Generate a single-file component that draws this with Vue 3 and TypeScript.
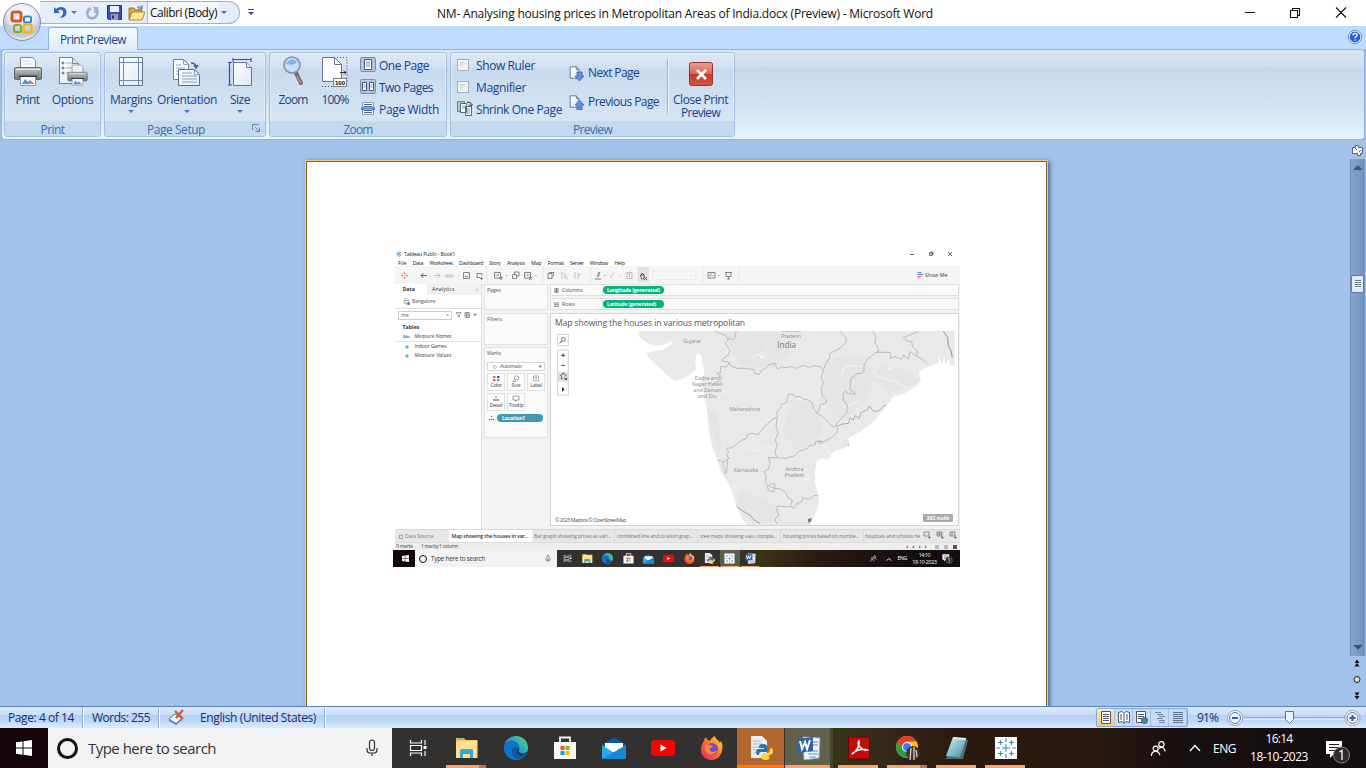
<script setup lang="ts">
import type { Directive } from 'vue'

// Spreads or tightens the letters of a label so that it takes a given width.
const vFit: Directive<HTMLElement, number> = {
  mounted(el, { value }) {
    const range = document.createRange()
    range.selectNodeContents(el)
    const length = (el.textContent ?? '').trim().length
    const width = range.getBoundingClientRect().width
    if (length > 0) el.style.letterSpacing = `${((value - width) / length).toFixed(3)}px`
  },
}

interface Label { text: string; w: number }
interface Task { icon: string; state?: string }

const menus: Label[] = [
  { text: 'File', w: 8.5 }, { text: 'Data', w: 10.5 }, { text: 'Worksheet', w: 23.5 },
  { text: 'Dashboard', w: 24 }, { text: 'Story', w: 11.5 }, { text: 'Analysis', w: 18 },
  { text: 'Map', w: 10.5 }, { text: 'Format', w: 16 }, { text: 'Server', w: 13.5 },
  { text: 'Window', w: 18.5 }, { text: 'Help', w: 10.5 },
]
const sheets: Label[] = [
  { text: 'Bar graph showing prices as vari...', w: 77 },
  { text: 'combined line and location grap...', w: 76 },
  { text: 'tree maps showing vasu compla...', w: 77 },
  { text: 'housing prices based on numbe...', w: 76 },
]
const tasks: Task[] = [
  { icon: 'taskview' }, { icon: 'explorer', state: 'open multi' }, { icon: 'edge' }, { icon: 'store' },
  { icon: 'mail' }, { icon: 'youtube' }, { icon: 'firefox' }, { icon: 'python', state: 'alert' },
  { icon: 'word', state: 'active' }, { icon: 'acrobat', state: 'open' }, { icon: 'chrome', state: 'open multi' },
  { icon: 'notepad', state: 'open' }, { icon: 'tableau', state: 'open' },
]
const miniTasks: Task[] = [
  { icon: 'taskview' }, { icon: 'explorer' }, { icon: 'edge' }, { icon: 'store' }, { icon: 'mail' },
  { icon: 'youtube' }, { icon: 'firefox' }, { icon: 'python', state: 'open' },
  { icon: 'tableau', state: 'active' }, { icon: 'word', state: 'open' },
]
const views = ['print', 'read', 'web', 'outline', 'draft']
</script>

<template>
  <div class="screen">
    <svg class="defs" width="0" height="0">
      <defs>
        <linearGradient id="gEdge" x1="0" y1="1" x2="1" y2="0"><stop offset="0" stop-color="#0c59a4" /><stop offset=".5" stop-color="#1b9de2" /><stop offset="1" stop-color="#5ddf5a" /></linearGradient>
        <linearGradient id="gFox" x1="0" y1="1" x2="1" y2="0"><stop offset="0" stop-color="#e9177a" /><stop offset=".5" stop-color="#ff7024" /><stop offset="1" stop-color="#ffe226" /></linearGradient>
        <linearGradient id="gNote" x1="0" y1="0" x2="1" y2="1"><stop offset="0" stop-color="#d5f0f4" /><stop offset="1" stop-color="#3f91a4" /></linearGradient>
        <linearGradient id="gPaper" x1="0" y1="0" x2="1" y2="1"><stop offset="0" stop-color="#fff" /><stop offset="1" stop-color="#dfe8f3" /></linearGradient>
        <linearGradient id="gBody" x1="0" y1="0" x2="0" y2="1"><stop offset="0" stop-color="#c9c9cb" /><stop offset="1" stop-color="#707176" /></linearGradient>
        <radialGradient id="gOrb" cx=".5" cy=".3" r=".7"><stop offset="0" stop-color="#fff" /><stop offset=".55" stop-color="#e3e7ee" /><stop offset=".8" stop-color="#bac3d2" /><stop offset="1" stop-color="#f4f7fb" /></radialGradient>
        <linearGradient id="gRed" x1="0" y1="0" x2="0" y2="1"><stop offset="0" stop-color="#eba297" /><stop offset=".48" stop-color="#d9644f" /><stop offset=".5" stop-color="#c23a22" /><stop offset="1" stop-color="#d4553f" /></linearGradient>
      </defs>
      <symbol id="taskview" viewBox="0 0 24 24"><g fill="none" stroke="#fff" stroke-width="1.2"><path d="M4.500 4v3h11V4M4.500 20v-3h11v3M4.500 9.500h11v5h-11zM19 4v5M19 15v5" /><path d="M19 10v3" stroke-width="3" /></g></symbol>
      <symbol id="explorer" viewBox="0 0 24 24"><path d="M1 2h8l1.500 2H22v17H1z" fill="#e8b64a" /><path d="M3 4.500h19.500V22H1V6z" fill="#ffe08d" /><path d="M5 22v-7q0-2 2-2h9q2 0 2 2v7h-3v-4H8v4z" fill="#36a7dd" /><path d="M3 3h5" stroke="#57b7df" stroke-width="1" /></symbol>
      <symbol id="edge" viewBox="0 0 24 24"><circle cx="12" cy="12" r="12" fill="url(#gEdge)" /><path d="M.5 11C2 5 8 3 12 6c3 2 4 5 3 7-1-3-6-3-7 1-1 5 3 8 6 9.500C6 25-.5 19 .5 11z" fill="#1273c2" /><path d="M8 14c1-4 6-4 7-1 0 2-2 2-1 4 2 2 6 2 9 0-2 5-7 7-10 6-3-1-6-5-5-9z" fill="#0d57a2" /><path d="M15 12c1 2-1 3 0 4 2 2 6 2 9-1l-1 2c-3 3-10 3-10-1 0-2 2-2 2-4z" fill="#33312f" /></symbol>
      <symbol id="store" viewBox="0 0 24 24"><path d="M7 7V1.500h10V7" fill="none" stroke="#f4f4f4" stroke-width="1.800" /><path d="M1 6h22v17H1z" fill="#f7f7f7" /><path d="M7.500 10h4v4h-4z" fill="#f04e24" /><path d="M12.500 10h4v4h-4z" fill="#7fba00" /><path d="M7.500 15h4v4h-4z" fill="#00a3ee" /><path d="M12.500 15h4v4h-4z" fill="#ffb900" /></symbol>
      <symbol id="mail" viewBox="0 0 24 24"><path d="M0 9 12 1l12 8v14H0z" fill="#0a5aa6" /><path d="M3 7h18v9H3z" fill="#fff" /><path d="m0 9 12 8L24 9v14H0z" fill="#29a8ea" /><path d="m0 23 24-14v14z" fill="#1689d6" /></symbol>
      <symbol id="youtube" viewBox="0 0 24 24"><rect x="0" y="4" width="24" height="16" rx="3.500" fill="#f20505" /><path d="m9.500 8.500 6 3.500-6 3.500z" fill="#fff" /></symbol>
      <symbol id="firefox" viewBox="0 0 24 24"><path d="M4 5c0-2 1-3 2-4 0 2 2 3 4 4 1-3 3-4 5-5 0 3 3 3 5 7l1-2c3 5 2 18-9 19C3 24-3 15 4 5z" fill="url(#gFox)" /><circle cx="12" cy="13" r="6" fill="#6e4bd8" /><path d="M5 9c3-2 5 0 8 1-1 2-3 1-3 4 1 3 5 2 7 0-1 5-9 7-12 0z" fill="#ff842f" /></symbol>
      <symbol id="python" viewBox="0 0 24 24"><path d="M2 0h11l5 5v17H2z" fill="#eceff1" /><path d="M4 5h8M4 8h10M4 11h10M4 14h5M4 17h5" stroke="#a9b1b7" /><path d="M10 11q0-3 4-3t4 3v5h-6q-2 0-2 3H8q-2-5 1-6h6v-1h-5z" fill="#2c70ad" /><path d="M15 17h4q2-1 2-5 4 0 3 5-1 2-4 2v1h-3q5 0 3 3-3 2-7 0-2-1-1-4z" fill="#ffd647" /></symbol>
      <symbol id="word" viewBox="0 0 24 24"><path d="m6 1 17 1-1 20-15 2z" fill="#edf3fc" stroke="#8fa9d0" /><path d="M16 6h5M16 9h5M11 15h10M11 18h10M12 21h7" stroke="#6d8bc0" /><path d="m1 3 15-2v14L1 17z" fill="#2f5faf" /><path d="m3 5 2 8 3-7 2 7 3-9" fill="none" stroke="#fff" stroke-width="2" /></symbol>
      <symbol id="acrobat" viewBox="0 0 24 24"><path d="M1.500 1h21v22h-21z" fill="#c20b0b" stroke="#6b0505" /><path d="M5 18c5-3 8-9 7-13-3 3 3 10 8 9-5-2-11 0-15 4z" fill="none" stroke="#fff" stroke-width="1.500" /></symbol>
      <symbol id="chrome" viewBox="0 0 24 24"><circle cx="11" cy="11" r="11" fill="#fbc116" /><path d="M1.500 5.500A11 11 0 0 1 20.500 5.500H11L6.500 13z" fill="#e33b2e" /><path d="M1.500 5.500 6.800 14l7.200 1-3 7A11 11 0 0 1 1.500 5.500z" fill="#259f4b" /><circle cx="11" cy="11" r="5" fill="#fff" /><circle cx="11" cy="11" r="4" fill="#3b7ee8" /><circle cx="17" cy="17" r="7" fill="#42352e" /><path d="m15 12-1 12M18 11v13M20 14l1 7" stroke="#d5d1ca" stroke-width="1.300" /></symbol>
      <symbol id="notepad" viewBox="0 0 24 24"><path d="m9 2 14 2-5 19H1z" fill="#516e76" /><path d="m8 1 13 2-6 18L1 20z" fill="url(#gNote)" /><path d="m8 2 13 1" stroke="#e9e9e9" stroke-width="2" /></symbol>
      <symbol id="tableau" viewBox="0 0 24 24"><path d="M1 1h22v22H1z" fill="#fff" /><path d="M12 8v8M8 12h8M12 2v4M12 18v4M2 12h4M18 12h4M6.500 4v5M4 6.500h5M17.500 4v5M15 6.500h5M6.500 15v5M4 17.500h5M17.500 15v5M15 17.500h5" stroke="#4687ad" stroke-width="1.100" /></symbol>
      <symbol id="win" viewBox="0 0 16 16"><path d="M0 2.300 6.500 1.400v6.200H0zM7.500 1.200 16 0v7.600H7.500zM0 8.500h6.500v6.200L0 13.800zM7.500 8.500H16V16l-8.500-1.200z" fill="#fff" /></symbol>
      <symbol id="people" viewBox="0 0 18 18"><g fill="none" stroke="#fff" stroke-width="1.300"><circle cx="6" cy="9" r="2.600" /><path d="M1.500 17c0-3 2-5 4.500-5s4 2 4.500 4" /><circle cx="12" cy="4.500" r="2.800" /><path d="M9.500 9c3-2.500 6-.5 6.500 3" /></g></symbol>
      <symbol id="mic" viewBox="0 0 14 18"><g fill="none" stroke="#333" stroke-width="1.200"><rect x="4.500" y="1" width="5" height="10.500" rx="2.500" /><path d="M2 9v2q0 3 3 3h4q3 0 3-3V9M7 14v3" /></g></symbol>
      <symbol id="note" viewBox="0 0 26 26"><path d="M1 3h16v13H9l-4 4v-4H1z" fill="#fff" /><path d="M4 6.500h10M4 9.500h10M4 12.500h6" stroke="#222" /><circle cx="16.500" cy="17" r="8" fill="#2c2b2b" stroke="#898989" /><path d="M14.500 14 17 12.500V22" fill="none" stroke="#fff" stroke-width="1.300" /></symbol>
      <symbol id="page" viewBox="0 0 16 16"><path d="M2.500 1.500h7l3 3v10h-10z" fill="url(#gPaper)" stroke="#5c6c88" /><path d="M9.500 1.500v3h3" fill="none" stroke="#5c6c88" /></symbol>
      <symbol id="printer" viewBox="0 0 32 32"><path d="M8.500 14V1.500h12l3 3V14" fill="#f8fafc" stroke="#7d8590" /><path d="M11 5h7M11 8h9" stroke="#d5dbe2" /><rect x="2.500" y="11.500" width="27" height="12" rx="1.500" fill="url(#gBody)" stroke="#66676c" /><path d="M4 13.500h24" stroke="#e5e5e6" /><path d="M26 16h2" stroke="#70c057" stroke-width="2" /><path d="M7 20.500h18" stroke="#36383e" stroke-width="2" /><path d="M8.500 21v8.500h15V21" fill="#f5faff" stroke="#8a93a0" /><path d="m10 28 3-5 3 3 2-2 4 4z" fill="#4f8fd4" /><path d="M17 27h4" stroke="#e27c56" stroke-width="2" /></symbol>
    </svg>

    <header class="titlebar">
      <div class="qat">
        <svg width="16" height="16" viewBox="0 0 16 16"><path d="M1 2v6h6L4.800 5.800C8 3.500 11 5 10 8.500c-.4 2-2 3.500-3.500 4.500 6 0 8-4 6.500-8C11 1 6 1.500 3 4z" fill="#3566b8" /></svg>
        <i class="tri" />
        <svg class="redo" width="14" height="14" viewBox="0 0 16 16"><path d="M7 3C0 5 2 14 8 14s8-7 4-10V8" fill="none" stroke="#a3b0c4" stroke-width="3" /><path d="M9 1h6v6z" fill="#a3b0c4" /></svg>
        <svg class="save" width="15" height="15" viewBox="0 0 15 15"><path d="M.5.5h14v14H2l-1.500-1z" fill="#3d50c0" stroke="#20318f" /><path d="M3 1h9v6H3z" fill="#eef3fd" /><path d="M4 9h7v6H4z" fill="#9a9eaa" /><path d="M5 10.500h2v3H5z" fill="#26327c" /></svg>
        <svg class="folder" width="17" height="16" viewBox="0 0 17 16"><path d="M1 3h5l2 2h6v3H4L1 14z" fill="#d9ad43" stroke="#886214" stroke-width=".8" /><path d="m1 15 3-8h13l-3 8z" fill="#ffe590" stroke="#987225" stroke-width=".8" /><path d="M9 3q2-3 5 0m0-3v4h-4" fill="none" stroke="#45679d" /></svg>
        <div class="fontbox"><span v-fit="67">Calibri (Body)</span></div><i class="tri" />
      </div>
      <i class="tri more" />
      <span class="doc-title" v-fit="496">NM- Analysing housing prices in Metropolitan Areas of India.docx (Preview) - Microsoft Word</span>
      <svg class="winctl" width="102" height="12" viewBox="0 0 102 12"><g fill="none" stroke="#111" stroke-width="1.100"><path d="M0 6.500h10M45.500 4.500h7v7h-7zM47.500 4.500v-2h7v7h-2M91 1.500l10 10M101 1.500l-10 10" /></g></svg>
    </header>
    <svg class="orb" width="40" height="40" viewBox="0 0 40 40"><circle cx="20" cy="20" r="18.500" fill="url(#gOrb)" stroke="#7e8eae" /><path d="M3.500 22a17 17 0 0 0 33 0q-16 6-33 0z" fill="#c3ccdb" opacity=".7" /><g fill="none" stroke-width="3"><rect x="10" y="10" width="9" height="9" rx="2" stroke="#e5531e" /><rect x="22" y="14.500" width="7" height="6" rx="1.500" stroke="#3688ce" stroke-width="2" /><rect x="12" y="23" width="7" height="7" rx="1.500" stroke="#7aae31" stroke-width="2" /><rect x="21.500" y="22.500" width="8" height="8" rx="1.500" stroke="#f4b616" stroke-width="2.500" /></g></svg>

    <div class="tabs"><div class="tab"><span v-fit="66">Print Preview</span></div>
      <svg class="help" width="14" height="14" viewBox="0 0 14 14"><circle cx="7" cy="7" r="6" fill="#2462d3" stroke="#fff" stroke-width="1.200" /><circle cx="7" cy="7" r="6.600" fill="none" stroke="#4376b9" stroke-width=".8" /><path d="M5 5.500c0-3 4-2.500 4-.4C9 6.500 7 6.500 7 8.200M7 9.500v1.300" fill="none" stroke="#fff" stroke-width="1.400" /></svg>
    </div>

    <div class="ribbon">
      <section class="group g-print">
        <div class="body">
          <button class="big b45"><svg width="32" height="32"><use href="#printer" /></svg><span v-fit="24">Print</span></button>
          <button class="big b45"><svg width="32" height="32" viewBox="0 0 32 32"><path d="M2.500 1.500h13l6 6v20h-19z" fill="url(#gPaper)" stroke="#6e7f9b" /><path d="M15.500 1.500v6h6" fill="#dce6f4" stroke="#6e7f9b" /><path d="M9 7h6M9 12h10M9 17h5" stroke="#98a7bf" /><g fill="none" stroke="#50627f"><circle cx="6" cy="7" r="1" /><circle cx="6" cy="12" r="1" /><circle cx="6" cy="17" r="1" /></g><use href="#printer" x="9" y="8" width="23" height="23" /></svg><span v-fit="41.500">Options</span></button>
        </div>
        <footer><span v-fit="24">Print</span></footer>
      </section>
      <section class="group g-setup">
        <div class="body">
          <button class="big b56"><svg width="32" height="32" viewBox="0 0 32 32"><path d="M4.500 1.500h23v28h-23z" fill="url(#gPaper)" stroke="#63758f" /><path d="M8.500 2v27M23.500 2v27M5 6.500h22M5 24.500h22" stroke="#7388ac" /></svg><span v-fit="42">Margins</span><i class="tri" /></button>
          <button class="big b56"><svg width="32" height="32" viewBox="0 0 32 32"><path d="M2.500 3.500h10l5 5v15h-15z" fill="#fff" stroke="#6a7d9b" /><path d="M12.500 3.500v5h5M5 9h5M5 12h9M5 15h9M5 18h9" fill="none" stroke="#8e9fba" /><path d="M7.500 13.500h16l5 5v11h-21z" fill="url(#gPaper)" stroke="#596d8b" /><path d="M23.500 13.500v5h5M11 17h10M11 20h15M11 23h15M11 26h15" fill="none" stroke="#8e9fba" /><path d="M20 7q5 0 5 4m-2-2 2 3 2-3" fill="none" stroke="#47619c" stroke-width="1.500" /></svg><span v-fit="60">Orientation</span><i class="tri" /></button>
          <button class="big b50"><svg width="32" height="32" viewBox="0 0 32 32"><path d="M9.500 6.500h13l5 5v18h-18z" fill="url(#gPaper)" stroke="#63758f" /><path d="M22.500 6.500v5h5" fill="#e9eff7" stroke="#63758f" /><path d="M9 3.500h18M9 2v4M27 2v4M5.500 7v22M4 6.500h4M4 29h4" stroke="#3750a6" stroke-width="1.200" /></svg><span v-fit="20">Size</span><i class="tri" /></button>
        </div>
        <footer><span v-fit="58">Page Setup</span><svg class="launcher" width="9" height="9" viewBox="0 0 9 9"><path d="M.5 6V.5H7M3 3l4.500 4.500M3.500 7.500h4v-4" fill="none" stroke="#6589b7" /></svg></footer>
      </section>
      <section class="group g-zoom">
        <div class="body">
          <button class="big b46"><svg width="32" height="32" viewBox="0 0 32 32"><path d="m19 17 5 10" stroke="#76676a" stroke-width="4" stroke-linecap="round" /><path d="m20 20 4 7" stroke="#bf9a8d" stroke-width="1.500" /><circle cx="15" cy="9" r="8" fill="#c6def7" stroke="#8592a8" stroke-width="1.600" /><path d="M9 8q5-8 11-2-3 4-11 2z" fill="#81b1e8" /></svg><span v-fit="29">Zoom</span></button>
          <button class="big b38"><svg width="32" height="32" viewBox="0 0 32 32"><path d="M3.500 1.500h12l7 7v17h-19z" fill="#fff" stroke="#67768e" /><path d="M15.500 1.500v7h7" fill="none" stroke="#67768e" /><path d="M18 1.500h10v26M3 30.500h12" fill="none" stroke="#3e5177" stroke-dasharray="1 2" /><path d="M21 16.500h6m-2-2 2 2-2 2" fill="none" stroke="#333" /><rect x="14.500" y="22.500" width="13" height="8" fill="#fff" stroke="#7c7c7c" /><text x="16" y="29" font-family="Liberation Sans" font-weight="700" font-size="6">100</text></svg><span v-fit="27">100%</span></button>
          <div class="stack s-zoom">
            <button class="row"><svg width="16" height="16" viewBox="0 0 16 16"><rect x=".5" y=".5" width="15" height="14" rx="1" fill="#b3c4df" stroke="#7a8db1" /><path d="M4.500 2.500h7v10h-7z" fill="#fff" stroke="#46567a" /><path d="M6 5h4M6 7h4M6 9h4" stroke="#798bab" /></svg><span v-fit="50">One Page</span></button>
            <button class="row"><svg width="16" height="16" viewBox="0 0 16 16"><rect x=".5" y=".5" width="15" height="14" rx="1" fill="#b3c4df" stroke="#7a8db1" /><path d="M2.500 3.500h4v8h-4zM9.500 3.500h4v8h-4z" fill="#fff" stroke="#46567a" /><path d="M3.500 6h2M3.500 8h2M10.500 6h2M10.500 8h2" stroke="#798bab" /></svg><span v-fit="54">Two Pages</span></button>
            <button class="row"><svg width="16" height="16" viewBox="0 0 16 16"><path d="M2.500 1.500h11v12h-11z" fill="#fff" stroke="#8093af" /><path d="M4 3.500h8M4 5.500h8M4 9.500h8M4 11.500h8" stroke="#4c5e7e" /><path d="m.5 7.500 3-3v2h9v-2l3 3-3 3v-2h-9v2z" fill="#477cd1" /></svg><span v-fit="60">Page Width</span></button>
          </div>
        </div>
        <footer><span v-fit="29">Zoom</span></footer>
      </section>
      <section class="group g-preview">
        <div class="body">
          <div class="stack s-show">
            <button class="row"><i class="check" /><span v-fit="59">Show Ruler</span></button>
            <button class="row"><i class="check" /><span v-fit="50">Magnifier</span></button>
            <button class="row"><svg width="16" height="16" viewBox="0 0 16 16"><path d="M.5.5h7v10h-7z" fill="#a9d3ab" stroke="#4b9b51" /><path d="M3.500 2.500h6v9h-6zM8.500 5.500h6v9h-6z" fill="#fff" stroke="#536685" /><path d="M5 5h3M5 7h3M10 8h3M10 10h3M10 12h3" stroke="#7489ad" /><path d="M10 1.500q5-1 4 3m-2-1 2 2 1.500-2" fill="none" stroke="#333" /></svg><span v-fit="86">Shrink One Page</span></button>
          </div>
          <div class="stack s-nav">
            <button class="row"><svg width="16" height="16" viewBox="0 0 16 16"><use href="#page" x="-1" width="14" height="15" /><path d="M8 7h5v4h2l-4.500 5L6 11h2z" fill="#5e92e9" stroke="#3159aa" stroke-width=".7" /></svg><span v-fit="51">Next Page</span></button>
            <button class="row"><svg width="16" height="16" viewBox="0 0 16 16"><use href="#page" x="-1" width="14" height="15" /><path d="M8 16h5v-5h2l-4.500-5L6 11h2z" fill="#5e92e9" stroke="#3159aa" stroke-width=".7" /></svg><span v-fit="71">Previous Page</span></button>
          </div>
          <i class="sep" />
          <button class="close"><svg width="24" height="24" viewBox="0 0 24 24"><rect x=".5" y=".5" width="23" height="23" rx="2" fill="url(#gRed)" stroke="#8b3a30" /><path d="m8 8 9 9M17 8l-9 9" stroke="#fff" stroke-width="2.600" /></svg><span v-fit="55">Close Print</span><span v-fit="39">Preview</span></button>
        </div>
        <footer><span v-fit="39">Preview</span></footer>
      </section>
    </div>

    <main class="desk">
      <article class="sheet">
        <div class="shot">
          <div class="t-title">
            <svg width="6" height="6" viewBox="0 0 12 12"><path d="M6 0v12M0 6h12M2 2l8 8M10 2l-8 8" stroke="#62a3d3" stroke-width="1.600" /></svg>
            <span v-fit="51">Tableau Public - Book1</span>
            <svg class="t-win" width="43" height="6" viewBox="0 0 43 6"><path d="M0 3.500h4M19.500 2h2.500v2.500h-2.500zM20.500 2V1H23v2.500h-1M38 1l4 4M42 1l-4 4" fill="none" stroke="#444" stroke-width=".8" /></svg>
          </div>
          <div class="t-menu"><span v-for="m in menus" :key="m.text" v-fit="m.w">{{ m.text }}</span></div>
          <div class="t-tools">
            <svg width="565" height="18" viewBox="395 266 565 18">
              <g stroke-width="1"><path d="M404.500 272v2M404.500 276.500v2.500" stroke="#ee8255" /><path d="M401 275.500h2.500M405.500 275.500h2.500" stroke="#e5896f" /><circle cx="404.500" cy="275.500" r="2.500" fill="none" stroke="#e09a8a" stroke-width=".6" /></g>
              <g fill="none" stroke="#777" stroke-width=".9">
                <path d="M427 275.500h-6m2.500-2.500-2.500 2.500 2.500 2.500" stroke="#555" /><path d="M434 275.500h6m-2.500-2.500 2.500 2.500-2.500 2.500M446 277v-2h7v2zM458 275.500h1" stroke="#bbb" /><path d="M463.500 272.500h6v6h-6zM465 276.500h3M477 273.500h5v2m-5-2v4h3m0 1h3m-1.500-1.500v3" /><path d="M494.500 272.500h6v5.500h-6zM496 276v-1M498 276v-2M499 278h4m-2-2v4M506 275.500h1M512.500 274.500h4v4h-4zM514.500 274v-2h4.500v4h-2M524.500 272.500h6v5.500h-6zM526 276v-1M528 276v-2m1 3 3 3m0-3-3 3M535.500 275.500h1M548 273.500h4v5h-4zm1-1h5l-1 4M595 279h6m-4-2 2-5 1 1-2 4M604.500 275.500h1" />
                <path d="M562 272v7m2-1h4m-4-2h3m-3-2h2M575 272v7m2-1h2m-2-2h3m-3-2h4M611 278q-1-2 3-5M619 275.500h1" stroke="#bbb" /><path d="M627 272.500h5v6h-5zM628.500 274h2M629.500 274v3" stroke="#999" stroke-width=".6" />
                <path d="M637.500 267h11.500v15.500h-11.500z" fill="#e3e3e3" stroke="none" /><path d="M640.500 275h4l-1 4h-2zM641 275l1-2 2 2m0 2 3 3m0-3-3 3" stroke="#333" stroke-width=".7" />
                <path d="M653 271h43v8.500h-43z" fill="#f7f7f7" stroke="#e2e2e2" stroke-width=".6" /><path d="m690.500 275 1 1 1-1" stroke="#bbb" stroke-width=".5" />
                <path d="M708 272.500h7v5.500h-7zM709.500 276v-1M711 276v-2.500M713 276v-1M718.500 275.500h1M725 272.500h7M726 273v3.500h5V273M728.500 277v2M727 279h3" /><path d="M703 267v16M739 267v16M487 267v16M543 267v16M591 267v16" stroke="#e2e2e2" stroke-width=".7" />
              </g>
              <path d="M917.500 272.500h4" stroke="#5e92c8" stroke-width="1.200" /><path d="M917.500 274.500h6" stroke="#777fcb" stroke-width="1.200" /><path d="M917.500 276.500h4M917.500 278h2" stroke="#ef6b6b" stroke-width="1.200" />
            </svg>
            <span class="showme" v-fit="22.500">Show Me</span>
          </div>
          <div class="t-body">
            <aside class="t-data">
              <div class="t-tabs"><b v-fit="12.500">Data</b><span v-fit="22.500">Analytics</span><em>‹</em></div>
              <div class="t-source"><svg width="7" height="7" viewBox="0 0 14 14"><ellipse cx="6" cy="3" rx="4" ry="2" fill="none" stroke="#888" /><path d="M2 3v7q4 2 5 1M10 3v3M5 5h6v7H5z" fill="none" stroke="#888" /><circle cx="11" cy="11" r="3" fill="#3a82ae" /></svg><span v-fit="23.500">Bangalore</span></div>
              <div class="t-search"><div><span v-fit="8">me</span><em>×</em></div><svg width="24" height="8" viewBox="0 0 24 8"><path d="M0 1.500h5L3.300 4v2.500L2 5V4zM9 1.500h4.500v5H9zM9 4h4.500M10.500 1.500v5M12 1.500v5" fill="none" stroke="#777" stroke-width=".7" /><path d="m17 3 2 2 2-2z" fill="#777" /></svg></div>
              <b class="t-head" v-fit="17">Tables</b>
              <div class="t-field lined"><small>Abc</small><i v-fit="37">Measure Names</i></div>
              <div class="t-field"><svg width="4" height="4"><circle cx="2" cy="2" r="1.700" fill="#69bd91" /></svg><span v-fit="32">Indoor Games</span></div>
              <div class="t-field"><svg width="4" height="4"><circle cx="2" cy="2" r="1.700" fill="#69bd91" /></svg><i v-fit="37">Measure Values</i></div>
            </aside>
            <div class="t-cards">
              <div class="card c-pages"><span v-fit="14">Pages</span></div>
              <div class="card c-filters"><span v-fit="15">Filters</span></div>
              <div class="card c-marks">
                <span v-fit="14">Marks</span>
                <div class="t-select"><i /><span v-fit="22">Automatic</span><em>▾</em></div>
                <div class="t-marks">
                  <div><svg width="8" height="7"><path d="M1 2h2.500M1 5h2.500" stroke="#e5654c" stroke-width="2" /><path d="M5 2h2.500" stroke="#5b498b" stroke-width="2" /><path d="M5 5h2.500" stroke="#5594d0" stroke-width="2" /></svg><span v-fit="11">Color</span></div>
                  <div><svg width="8" height="7" fill="none" stroke="#777" stroke-width=".7"><circle cx="4.500" cy="3" r="2.200" /><path d="M3 4.500 1 6.500h3" /></svg><span v-fit="9">Size</span></div>
                  <div><svg width="8" height="7" fill="none" stroke="#777" stroke-width=".6"><path d="M1.500 1h5v5h-5zM3 2.500h2M4 2.500V5" /></svg><span v-fit="11.500">Label</span></div>
                  <div><svg width="8" height="7" fill="#777"><circle cx="4" cy="2" r=".8" /><circle cx="2" cy="5" r=".9" /><circle cx="4" cy="5" r=".9" /><circle cx="6" cy="5" r=".9" /></svg><span v-fit="12.500">Detail</span></div>
                  <div><svg width="8" height="7" fill="none" stroke="#777" stroke-width=".7"><path d="M1 1h6v4H5L3.500 6.500V5H1z" /></svg><span v-fit="14.500">Tooltip</span></div>
                </div>
                <div class="t-pill"><svg width="7" height="6" fill="#777"><circle cx="3.500" cy="1.500" r=".8" /><circle cx="1.500" cy="4.500" r=".8" /><circle cx="3.500" cy="4.500" r=".8" /><circle cx="5.500" cy="4.500" r=".8" /></svg><span><b v-fit="23">Location1</b></span></div>
              </div>
            </div>
            <div class="t-view">
              <div class="shelf"><div><svg width="5" height="5"><path d="M1 0v5M2.500 0v5M4 0v5" stroke="#777" /></svg><span v-fit="20.500">Columns</span></div><b><span v-fit="53">Longitude (generated)</span></b></div>
              <div class="shelf"><div><svg width="5" height="5"><path d="M0 1h5M0 2.700h5M0 4.400h5" stroke="#777" stroke-width=".9" /></svg><span v-fit="13">Rows</span></div><b><span v-fit="49">Latitude (generated)</span></b></div>
              <div class="viz">
                <h2 v-fit="190">Map showing the houses in various metropolitan</h2>
                <svg class="map" width="400" height="194" viewBox="0 0 1200 582">
                  <g transform="translate(315,-18)">
                    <path fill="#e9e9e9" d="M-65 18-62 35-45 50-20 62 10 60 35 47 38 54 10 74-20 78-42 85-35 97-8 123 20 150 45 167 72 160 95 145 108 132 105 105 112 86 122 86 128 115 134 140 125 165 131 203 141 260 147 320 157 370 170 400 183 440 205 475 220 510 230 545 245 580 262 600 450 600 462 575 474 545 477 510 466 480 464 445 470 410 485 400 503 405 515 385 530 375 550 372 568 358 564 340 600 320 640 290 675 250 700 215 735 205 772 180 783 165 776 145 795 130 815 122 835 115 838 92 845 120 852 95 857 120 866 100 872 122 884 122 884 18z" />
                    <g fill="#e2e2e2" opacity=".55"><path d="m190 20 160 0 60 50-70 60-100-10zM500 100l100-10 50 60-40 80-60 60-70-60zM670 120l90 20 10 40-80 20-50-40zM390 220l80 20 20 90-80 50-40-60zM240 500l80 20 50 70-90 5-50-60z" /><path d="m140 250 30 10 15 100-10 30z" /></g>
                    <g fill="none" stroke="#f8f8f8" stroke-width="2.500"><path d="m275 105 10-15 25-5 20-20M390 75l25-10M545 155l5-25 25-10 35 5M635 140l20 15 50 15 40 20 25-12M245 370l40 8 35-15 25 10M535 325l10 30M490 350l20 40M430 465l25-5M190 200l15 5M225 285l15 8M440 20l10 15M410 230l5-12 15 5M220 490l10-15M550 250l45-20" /><path d="m683 130 10 3M300 98l12-5" stroke-width="7" /></g>
                    <g fill="none" stroke="#a6a6a6" stroke-width="2" stroke-linejoin="bevel">
                      <path d="M162 18 180 25 195 30 205 45 195 55 210 75 205 90 190 100 185 108 208 112 212 122 230 130 255 130 280 133 285 145 298 148 305 135 315 131 325 120 345 115 352 132 365 126 380 128 395 124 410 130 432 120 445 128 460 122 480 125 490 138M232 18 225 25 228 34 218 43 203 40M208 112 200 125 180 125 183 142 170 145 185 155 180 168 160 175" />
                      <path d="M540 18 555 35 560 50 540 70 520 80 510 85 508 98 495 120 490 138 484 155 490 175 484 190 486 210 500 225 497 235 480 240 475 262" />
                      <path d="M350 260 362 250 365 238 380 232 385 208 400 208 405 216 420 215 432 224 440 222 455 232 460 248 470 264 488 275 500 285 512 302 526 306" />
                      <path d="M350 260 352 277 338 282 330 290 318 300 308 312 298 322 295 330 278 325 262 328 260 340 248 345 235 352 225 362 215 368 200 370 206 380 200 392 208 400 190 410 172 405M190 410 188 425 195 430 195 445 200 443 203 405" />
                      <path d="M352 277 348 305 354 325 346 345 352 362 345 378 350 397M325 398 350 398 378 400 390 396 405 392 415 380 425 376 440 372 447 362 465 360 467 350 482 348 488 353 480 356 474 350 492 350 510 340 530 325 533 308" />
                      <path d="M325 398 330 412 326 432 312 440 318 455 315 470 322 480 325 497 342 500 345 478 332 475 325 482 345 490 362 492 380 505 380 515 397 525 392 545 370 545 352 543 350 555 357 570 345 582 350 597M392 545 400 550 408 538 425 530 428 518 445 523 455 518 462 511 474 512" />
                      <path d="M526 306 530 295 545 280 560 262 562 240 550 225 550 208 556 198 562 205 585 208 584 203 570 195 573 160 582 155 588 146 605 145 612 140 612 120 625 100 645 85 657 80" />
                      <path d="M530 304 545 298 565 295 570 278 580 285 585 272 598 280 603 262 622 255 628 243 640 258 655 258 665 248 677 240" stroke="#909090" />
                      <path d="M638 18 648 35 645 55 657 75 650 82 690 82 692 100 705 95 725 103 730 90 745 102 750 80 768 92 790 105 803 118M775 20 755 28 730 38 740 48 755 50 758 65 772 78 770 92" />
                      <path d="M230 545 247 557 272 572 282 585 300 595" stroke="#888" stroke-width="2.200" />
                      <path d="M850 18 863 38 865 62 873 77 877 98" stroke="#929292" stroke-width="3" />
                    </g>
                    <path d="m443 582 12-3-2 10-7 5z" fill="#777" /><circle cx="565" cy="360" r="3" fill="#bbb" />
                    <g font-family="Open Sans, sans-serif" font-size="15.500" text-anchor="middle" fill="#8c8c8c"><text x="96" y="54">Gujarat</text><text x="393" y="22">Madhya</text><text x="393" y="38">Pradesh</text><text x="380" y="68" font-size="24.500" fill="#777">India</text><text x="142" y="165">Dadra and</text><text x="142" y="183">Nagar Haveli</text><text x="142" y="201">and Daman</text><text x="142" y="219">and Diu</text><text x="254" y="257">Maharashtra</text><text x="258" y="440">Karnataka</text><text x="404" y="437">Andhra</text><text x="404" y="455">Pradesh</text></g>
                  </g>
                  <g fill="#fff" stroke="#bbb" stroke-width="2"><path d="M8 10h32v34H8zM8 57h32v135H8z" /><path d="M9 122h30v30H9z" fill="#ddd" stroke="none" /><g fill="none" stroke="#444" stroke-width="3"><circle cx="25" cy="25" r="6" stroke="#777" /><path d="m20 30-6 7M19 73h11M24.500 67v11M19 103h11" /><path d="M16 132l6-1 3-6 3 6 6 1-4 4M16 132l4 5-1 7 6-3" stroke-width="2" /><path d="m29 140 7 7m0-7-7 7" /></g><path d="m21 168 8 7-8 7z" fill="#333" stroke="none" /></g>
                </svg>
                <span class="credit" v-fit="71">© 2023 Mapbox © OpenStreetMap</span><b class="nulls">302 nulls</b>
              </div>
            </div>
          </div>
          <div class="t-sheets">
            <span class="src"><svg width="4" height="5"><path d="M.5 1h3v3.500h-3z" fill="none" stroke="#888" stroke-width=".7" /></svg><span v-fit="28.500">Data Source</span></span><b class="cur"><span v-fit="77">Map showing the houses in var...</span></b><span v-for="s in sheets" :key="s.text" class="st"><span v-fit="s.w">{{ s.text }}</span></span><span class="last"><span v-fit="55">hospitals and schools ne</span></span>
            <svg width="36" height="10" fill="none" stroke="#777" stroke-width=".8"><path d="M3 2h5v4H3zM7 7.500h3M8.500 6v3M16 2h5v4h-5zM18.500 2v4M16 4h5M20 7.500h3M21.500 6v3M29 2h5v4h-5zM31 2v4M33 7.500h3M34.500 6v3" /></svg>
          </div>
          <div class="t-status"><span v-fit="17">0 marks</span><span v-fit="37">1 row by 1 column</span><svg width="52" height="6" fill="#777"><path d="M2 1.500v3L0 3zM8 1.500v3L6 3zM13 1.500v3l2-1.500zM19 1.500v3L21 3z" /><path d="M29 1h4v4h-4zM38 1h4v4h-4z" fill="#bbb" /><path d="M47 1h4v4h-4z" fill="#555" /></svg></div>
          <div class="t-task">
            <div class="ts"><svg width="7" height="7"><use href="#win" /></svg></div>
            <div class="tq"><i /><span v-fit="54">Type here to search</span><svg width="6" height="9"><use href="#mic" /></svg></div>
            <div v-for="t in miniTasks" :key="t.icon" class="ti" :class="t.state"><svg width="11" height="11"><use :href="'#' + t.icon" /></svg></div>
            <div class="tt"><svg width="7" height="7"><use href="#people" /></svg><svg width="6" height="4"><path d="m.5 3.500 2.500-2 2.500 2" fill="none" stroke="#fff" stroke-width=".8" /></svg><span v-fit="9.500">ENG</span><p><span v-fit="11.500">14:10</span><span v-fit="24.500">18-10-2023</span></p><svg width="11" height="11"><use href="#note" /></svg></div>
          </div>
        </div>
      </article>
      <div class="scroll">
        <svg width="13" height="13" viewBox="0 0 13 13"><path d="M1.500 3.500h3v-2h3v2h4v6h-2v2h-3v-2h-5z" fill="#f5f1f5" stroke="#5a6484" /><path d="m4 4 2 2m2 2 2-2" stroke="#5a6484" /></svg>
        <div class="track"><i class="up" /><i class="thumb" /><i class="down" /></div>
        <svg width="10" height="50" viewBox="0 0 10 50"><path d="M5 3.500 2.500 7h5zM5 7l-2.500 3.500h5z" fill="#111" /><circle cx="5" cy="23.500" r="3" fill="#ddd9cd" stroke="#222" /><path d="m5 40-2.500-3.500h5zM5 43.500 2.500 40h5z" fill="#111" /></svg>
      </div>
    </main>

    <div class="status">
      <div class="sc s1"><span v-fit="66">Page: 4 of 14</span></div><div class="sc s2"><span v-fit="58">Words: 255</span></div>
      <div class="sc s3"><svg width="17" height="17" viewBox="0 0 17 17"><path d="m1 10 6-5 7 4-6 6z" fill="#f4f8ff" stroke="#5676a6" /><path d="m1 10 7 4 6-5v2l-6 5-7-4z" fill="#5d7fc1" /><path d="m7 2 8 8m0-9L8 9" stroke="#e2532d" stroke-width="2.300" /></svg><span v-fit="116">English (United States)</span></div>
      <div class="views"><i v-for="v in views" :key="v" :class="v"><svg width="12" height="13" viewBox="0 0 12 13" fill="none" stroke="#4b5666">
        <path v-if="v === 'print'" d="M1.500.5h9v12h-9zM3 3.500h6M3 5.500h6M3 7.500h6M3 9.500h6" fill="#fff" />
        <path v-else-if="v === 'read'" d="M.5 1.500 4 .5l2 2 2-2 3.500 1v10L8 10.500l-2 2-2-2-3.500 1zM6 2.500v10M2 4h2M2 6h2M2 8h2M8 4h2M8 6h2M8 8h2" fill="#fff" />
        <g v-else-if="v === 'web'"><path d="M.5.500h9v11h-9zM2 3.500h6M2 5.500h6M2 7.500h4" fill="#fff" /><circle cx="8.500" cy="9.500" r="3" fill="#3c9272" stroke="#2e62a7" /></g>
        <path v-else-if="v === 'outline'" d="M1 1.500h6M3 3.500h6M5 5.500h6M3 7.500h6M5 9.500h6M5 11.500h6" stroke="#7084a2" />
        <path v-else d="M1 1.500h10M1 3.500h10M1 5.500h10M1 7.500h10M1 9.500h10M1 11.500h10" stroke="#5e6f88" /></svg></i></div>
      <span class="pct" v-fit="21">91%</span>
      <svg class="zoomer" width="136" height="18" viewBox="0 0 136 18"><path d="M17 9h102" stroke="#6689b8" /><path d="M17 10h102" stroke="#fff" /><g fill="#e9f1fb" stroke="#58739f"><circle cx="8" cy="9" r="7.500" fill="#fff" stroke="#8ca3c4" /><circle cx="8" cy="9" r="5.500" /><circle cx="125.500" cy="9" r="7.500" fill="#fff" stroke="#8ca3c4" /><circle cx="125.500" cy="9" r="5.500" /><path d="M58.500 2.500h8v8l-4 4-4-4z" /></g><path d="M5 9h6M122.500 9h6M125.500 6v6" stroke="#4a5d7b" stroke-width="2" /></svg>
    </div>

    <div class="taskbar">
      <div class="start"><svg width="16" height="16"><use href="#win" /></svg></div>
      <div class="search"><i /><span v-fit="128">Type here to search</span><svg width="14" height="18"><use href="#mic" /></svg></div>
      <div v-for="t in tasks" :key="t.icon" class="task" :class="t.state"><svg width="24" height="24"><use :href="'#' + t.icon" /></svg></div>
      <div class="tray">
        <svg class="pp" width="17" height="17"><use href="#people" /></svg>
        <svg class="chev" width="12" height="8"><path d="m1 7 5-5.500L11 7" fill="none" stroke="#fff" stroke-width="1.300" /></svg>
        <span class="eng" v-fit="23">ENG</span>
        <p><span v-fit="27">16:14</span><span v-fit="58">18-10-2023</span></p>
        <svg class="nt" width="26" height="26"><use href="#note" /></svg>
      </div>
    </div>
  </div>
</template>

<style>
body { margin: 0; overflow: hidden; }
</style>
<style scoped>
* { box-sizing: border-box; }
.screen { width: 1366px; height: 768px; position: relative; overflow: hidden; display: flex; flex-direction: column; background: #a3c2ea; font: 12px/15px "Open Sans", "Noto Sans", sans-serif; color: #15428b; white-space: nowrap; }
svg { display: block; flex: none; }
.defs { position: absolute; }
i, em { font-style: normal; }
button { font: inherit; color: inherit; border: 0; padding: 0; background: none; }
p { margin: 0; }
.tri { width: 0; height: 0; border: 3px solid transparent; border-top-color: #4e77b5; border-bottom: 0; flex: none; }
.titlebar { height: 26px; flex: none; background: #fff; display: flex; align-items: center; padding-right: 19px; color: #111; }
.qat { margin-left: 40px; margin-top: -1px; width: 200px; height: 23px; padding-left: 13px; border: 1px solid #a6b2c4; border-left: 0; border-radius: 0 12px 12px 0; background: #e3edfb; display: flex; align-items: center; }
.qat > .tri { margin-left: 2px; }
.redo { margin-left: 8px; }
.save { margin-left: 8px; }
.folder { margin-left: 6px; }
.fontbox { width: 72px; margin-left: 2px; padding-left: 2px; border-left: 1px solid #a5bede; height: 21px; line-height: 21px; background: #f2f7fd; }
.more { margin-left: 8px; border-top-color: #2c4d85; position: relative; }
.more::before { content: ""; position: absolute; width: 6px; height: 1px; left: -3px; top: -6px; background: #2c4d85; }
.doc-title { margin-left: 183px; }
.winctl { margin-left: auto; margin-top: -2px; }
.orb { position: absolute; left: 2px; top: 2px; z-index: 2; }
.tabs { height: 23px; flex: none; background: #bfdbff; display: flex; justify-content: space-between; padding: 1px 4px 0 48px; }
.tab { width: 90px; height: 23px; position: relative; z-index: 1; border: 1px solid #8db2e3; border-bottom: 0; border-radius: 3px 3px 0 0; background: linear-gradient(#f7fbff, #dfebf8); text-align: center; line-height: 23px; }
.help { margin-top: 3px; }
.ribbon { height: 91px; flex: none; margin: 0 1px; padding: 2px; border: 1px solid #8db2e3; border-radius: 4px; display: flex; gap: 3px; background: linear-gradient(#dbe6f4, #cfdded 17px, #c6d8ee 18px, #cddff0 45px, #d8e8f5 67px, #e4f5ff 88px); box-shadow: 0 1px #8fadd3; }
.group { height: 85px; border: 1px solid #a3bfdd; border-radius: 3px; display: flex; flex-direction: column; overflow: hidden; box-shadow: inset 0 0 0 1px #ffffff60; background: linear-gradient(#dee9f5, #d1dfef 15px, #c8daef 16px, #d5e5f3 68px); }
.g-print { width: 97px; } .g-setup { width: 162px; } .g-zoom { width: 178px; } .g-preview { width: 285px; }
.body { height: 68px; flex: none; display: flex; padding-left: 1px; }
.group footer { height: 15px; flex: none; background: #c2d9f0; color: #3e6aaa; text-align: center; line-height: 17px; position: relative; }
.g-setup footer { padding-right: 18px; }
.launcher { position: absolute; right: 4px; top: 3px; }
.big { display: flex; flex-direction: column; align-items: center; padding-top: 3px; }
.big span { margin-top: 4px; }
.big .tri { margin-top: 3px; }
.b45 { width: 45px; } .g-print .b45:first-child { margin-left: -1px; } .b56 { width: 56px; margin-left: -2px; } .b56:first-child { margin-left: -3px; } .b50 { width: 50px; } .b46 { width: 46px; margin-left: -1px; } .b38 { width: 38px; }
.big.b56 + .big.b56 { margin-left: 0; }
.stack { display: flex; flex-direction: column; padding-top: 1px; }
.row { height: 22px; display: flex; align-items: center; }
.s-zoom { margin-left: 6px; } .s-zoom .row { gap: 3px; }
.s-show { margin-left: 5px; width: 112px; } .s-show .row { gap: 3px; }
.check { width: 12px; height: 12px; border: 1px solid #9fadc0; background: linear-gradient(135deg, #b9bdc1, #fafafa 75%); box-shadow: inset 0 0 0 2px #f4f4f4; margin-right: 4px; }
.s-nav { padding-top: 5px; gap: 0; width: 98px; } .s-nav .row { height: 29px; gap: 3px; }
.sep { width: 2px; height: 55px; margin-top: 6px; border-left: 1px solid #9bb5d4; background: #eef5fc; }
.close { display: flex; flex-direction: column; align-items: center; padding: 9px 0 0 4px; line-height: 13px; }
.close span:first-of-type { margin-top: 7px; }
.desk { height: 566px; flex: none; overflow: hidden; display: flex; justify-content: space-between; background: #a3c2ea; }
.sheet { width: 741px; height: 600px; margin: 21px 0 0 306px; padding: 86px 0 0 86px; background: #fff; border: 1px solid #8b5c1f; outline: 1px solid #f4c983; box-shadow: 2px 1px 4px 1px #496a99; }
.scroll { width: 18px; height: 566px; display: flex; flex-direction: column; align-items: center; padding-top: 4px; }
.track { width: 15px; height: 497px; flex: none; margin-top: 2px; border-left: 1px solid #6b8cb8; background: linear-gradient(90deg, #84a5cd, #6d91bf); display: flex; flex-direction: column; align-items: center; }
.up, .down { width: 0; border: 5px solid transparent; }
.up { border-top: 0; border-bottom-color: #425677; margin-top: 6px; }
.down { border-bottom: 0; border-top-color: #425677; margin: auto 0 6px; }
.thumb { width: 13px; height: 18px; margin-top: 105px; border: 1px solid #697f9f; border-radius: 2px; background: repeating-linear-gradient(#5e7189 0 1px, #fff 1px 2px) 3px 4px / 6px 8px no-repeat, #e1eaf5; }
.status { height: 22px; flex: none; border-top: 1px solid #5683bb; background: linear-gradient(#dce9fb, #cbdff9 35%, #b2d0f5 40%, #bdd7f8 65%, #dbe8fa 95%); display: flex; align-items: center; color: #153069; }
.sc { height: 20px; line-height: 20px; border-right: 1px solid #8fadd4; box-shadow: 1px 0 #fff; padding-left: 9px; }
.s1 { width: 83px; padding-left: 8px; } .s2 { width: 76px; } .s3 { width: 166px; display: flex; gap: 15px; align-items: center; }
.views { margin-left: auto; width: 92px; height: 19px; border: 1px solid #86a6d1; border-radius: 2px; display: flex; background: #c6dbf7; }
.views i { width: 18px; display: grid; place-items: center; border-right: 1px solid #a9c2e4; }
.views .print { background: linear-gradient(#fde9c3, #fdc75d); }
.pct { width: 22px; margin: 0 8px 0 9px; }
.zoomer { margin-right: 3px; }
.taskbar { height: 40px; flex: none; display: flex; color: #fff; background: linear-gradient(90deg, #150709 0 48px, #33312f 392px, #33312f 735px, #383315 835px, #33291a 880px, #2d190e 960px, #2a1a12 1090px, #170f0f 1180px, #140e10); font-size: 12px; }
.start { width: 48px; display: grid; place-items: center; background: #150709; }
.search { width: 344px; background: #f2f2f2; color: #333; display: flex; align-items: center; padding: 0 13px 0 9px; font-size: 15px; }
.search i { width: 21px; height: 21px; border: 3px solid #111; border-radius: 50%; margin: 0 10px 0 0; }
.search svg { margin-left: auto; }
.task { width: 49px; position: relative; display: grid; place-items: center; padding-left: 2px; }
.open::after, .active::after, .alert::after { content: ""; position: absolute; left: 5px; right: 4px; bottom: 0; height: 3px; background: #f6a56c; }
.multi::after { background: linear-gradient(90deg, #f6a56c 33px, #b97950 33px); }
.alert { background: #b26630; background-clip: content-box; }
.alert::after { left: 2px; right: 0; background: #ff7a0a; }
.task.active { background: linear-gradient(90deg, transparent 1px, #60604d 1px 46px, #45442f 46px); padding-left: 1px; }
.task.active::after { left: 1px; right: 3px; }
.tray { flex: 1; display: flex; align-items: center; }
.pp { margin-left: 121px; } .chev { margin-left: 22px; } .eng { margin-left: 12px; width: 24px; }
.tray p { margin-left: 12px; width: 60px; display: flex; flex-direction: column; align-items: center; line-height: 18px; }
.nt { margin-left: 16px; margin-top: 6px; }

.shot { width: 567px; height: 319px; font-size: 5.2px; line-height: 7px; color: #555; background: #fff; display: flex; flex-direction: column; }
.shot > div { flex: none; }
.shot > div:not(.t-task) { margin-left: 2px; }
.t-title { height: 11px; display: flex; align-items: center; padding: 1px 7px 0 1px; gap: 2px; color: #222; }
.t-win { margin-left: auto; }
.t-menu { height: 7px; padding: 2px 0 0 3px; display: flex; gap: 6.200px; color: #111; align-items: center; }
.t-tools { height: 18px; background: #f5f5f5; position: relative; }
.showme { position: absolute; left: 530px; top: 6px; color: #333; }
.t-body { height: 245px; display: flex; background: #f3f3f3; }
.t-data { width: 87px; background: #fff; border-right: 1px solid #ddd; display: flex; flex-direction: column; }
.t-tabs { height: 11px; line-height: 11px; display: flex; background: linear-gradient(90deg, #fff 32px, #f1f1f1 32px); padding-left: 7.500px; color: #333; }
.t-tabs b { width: 29.500px; } .t-tabs span { width: 44px; }
.t-source { height: 14px; display: flex; align-items: center; gap: 2px; padding-left: 8px; border-bottom: 1px solid #ddd; }
.t-search { margin: 2px 0 0 3px; height: 9px; display: flex; gap: 4px; }
.t-search div { width: 54px; border: 1px solid #ccc; padding: 0 2px; display: flex; justify-content: space-between; }
.t-head { margin: 4px 0 1px 7.500px; color: #333; }
.t-field { height: 9px; display: flex; align-items: center; padding-left: 10px; gap: 5.500px; color: #444; }
.t-field i { font-style: italic; }
.t-field small { font-size: 3.800px; width: 6px; margin-left: -2px; color: #3a86ac; font-weight: 700; }
.t-field.lined { height: 10px; border-bottom: 1px solid #e2e2e2; }
.t-cards { width: 66px; padding: 0 0 0 2px; display: flex; flex-direction: column; }
.card { border: 1px solid #e2e2e2; background: #fafafa; padding: 2px; }
.card > span { display: block; line-height: 7px; }
.c-pages { height: 26px; margin-bottom: 3px; } .c-filters { height: 32px; margin-bottom: 2px; } .c-marks { height: 91px; }
.t-select { height: 9px; width: 58px; margin: 5px 0 2px; border: 1px solid #d5d5d5; background: #fff; display: flex; align-items: center; padding: 0 2px 0 5px; gap: 3px; }
.t-select i { width: 4px; height: 4px; border: 1px solid #bbb; border-radius: 50%; } .t-select em { margin-left: auto; }
.t-marks { display: grid; grid-template-columns: repeat(3, 18px); gap: 2px; }
.t-marks div { height: 18px; border: 1px solid #e0e0e0; background: #fdfdfd; display: flex; flex-direction: column; align-items: center; padding-top: 1px; color: #444; }
.t-pill { margin-top: 3px; display: flex; align-items: center; gap: 2px; padding-left: 1px; }
.t-pill > span { width: 46px; height: 8px; border-radius: 4px; background: #4196b0; color: #fff; padding-left: 5px; line-height: 8px; font-size: 5px; }
.t-view { width: 409px; margin-left: 2px; display: flex; flex-direction: column; gap: 2px; }
.shelf { height: 12px; border: 1px solid #dedede; background: #fafafa; display: flex; align-items: center; }
.shelf div { width: 52px; height: 10px; border-right: 1px solid #ddd; display: flex; align-items: center; gap: 3px; padding-left: 3px; }
.shelf b { width: 61px; height: 8px; border-radius: 4px; background: #02b180; color: #fff; line-height: 8px; padding-left: 4px; font-size: 5px; }
.viz { flex: 1; margin: 1px 0 3px; border: 1px solid #d4d4d4; background: #fff; position: relative; padding: 4px 0 0 4px; }
.viz h2 { margin: 0; font-size: 8.600px; font-weight: 400; line-height: 10px; height: 13px; color: #555; }
.map { display: block; }
.credit { position: absolute; left: 4px; bottom: 1px; }
.nulls { position: absolute; right: 5px; bottom: 3px; width: 30px; height: 8px; line-height: 8px; border-radius: 1px; background: #aaa; color: #fff; text-align: center; }
.t-sheets { height: 13px; display: flex; line-height: 12px; background: #e7e7e7; color: #777; border-top: 1px solid #d8d8d8; }
.src { width: 54px; display: flex; align-items: center; gap: 2px; padding-left: 4px; }
.cur { width: 83px; background: #fff; padding-left: 2.500px; color: #333; font-weight: 600; border-bottom: 1px solid #fff; }
.st { width: 83px; padding-left: 2px; border-right: 1px solid #d7d7d7; }
.t-sheets .last { width: 57px; padding-left: 1px; }
.t-status { height: 8px; line-height: 7px; background: #eee; border-top: 1px solid #ddd; display: flex; gap: 8px; padding: 0 2px 0 1px; color: #444; align-items: center; }
.t-status svg { margin-left: auto; }
.t-task { height: 17px; width: 567px; display: flex; color: #fff; background: linear-gradient(90deg, #33312f 60%, #3b3315 65%, #2b1a13 75%, #140e10 90%); }
.ts { width: 22px; padding-left: 2px; background: #150709; display: grid; place-items: center; }
.tq { width: 142px; background: #f2f2f2; color: #333; display: flex; align-items: center; padding: 0 6px 0 4px; font-size: 6.200px; }
.tq i { width: 8px; height: 8px; border: 1.200px solid #111; border-radius: 50%; margin-right: 4px; } .tq svg { margin-left: auto; }
.ti { width: 20.350px; position: relative; display: grid; place-items: center; }
.ti::after { height: 1.300px; left: 1px; right: 1px; }
.ti.active { background: #5c5c4b; }
.tt { flex: 1; display: flex; align-items: center; padding-left: 110px; }
.tt > svg:nth-child(2) { margin-left: 9px; } .tt > span { margin-left: 5px; width: 10px; }
.tt p { width: 26px; margin-left: 4px; display: flex; flex-direction: column; align-items: center; line-height: 7px; }
.tt > svg:last-child { margin-left: 5px; }
</style>
